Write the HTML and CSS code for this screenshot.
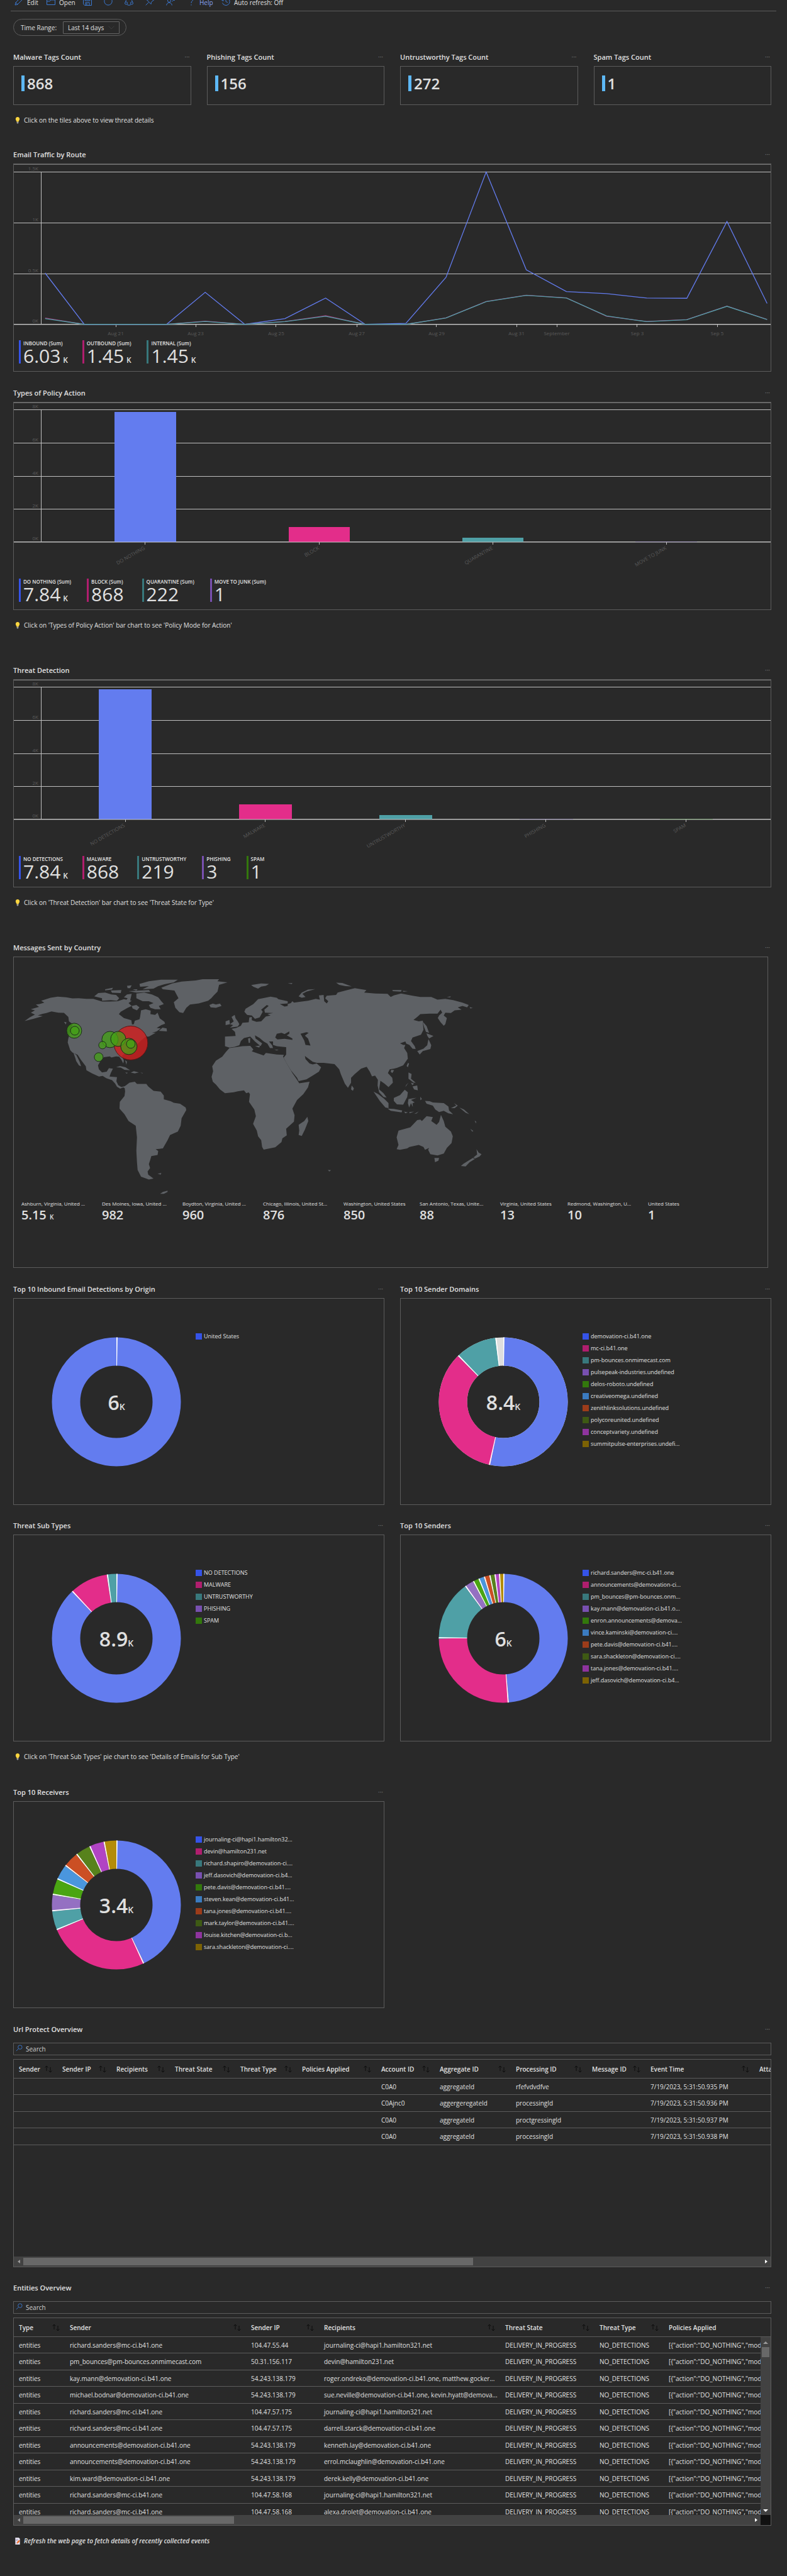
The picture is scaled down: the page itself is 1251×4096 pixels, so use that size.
FILE: index.html
```html
<!DOCTYPE html>
<html lang="en">
<head>
<meta charset="utf-8">
<meta name="viewport" content="width=device-width, initial-scale=1">
<title>Email Security Workbook</title>
<link rel="stylesheet" href="styles.css">
</head>
<body>
<svg class="defs" width="0" height="0" aria-hidden="true">
  <symbol id="bulb" viewBox="0 0 8 12"><path d="M4 0C1.800 0 0.500 1.600 0.500 3.500C0.500 5.500 2.200 6.300 2.400 8.500H5.600C5.800 6.300 7.500 5.500 7.500 3.500C7.500 1.600 6.200 0 4 0Z" fill="#fcd53f"/><path d="M2.500 8.500H5.500V10.500L4.800 11.500H3.200L2.500 10.500Z" fill="#9b9b9b"/></symbol>
  <symbol id="sort" viewBox="0 0 14 12"><path d="M4 9V1M1.500 3.500L4 1L6.500 3.500M10 3V11M7.500 8.500L10 11L12.500 8.500" fill="none" stroke="#0c0c0c"/></symbol>
  <symbol id="loupe" viewBox="0 0 12 12"><circle cx="7.500" cy="4.500" r="3.500" fill="none" stroke="#3b78d0"/><path d="M5 7L1 11" stroke="#3b78d0"/></symbol>
</svg>

<header class="toolbar">
  <button class="tool tool-edit"><svg class="icon" viewBox="0 0 14 14"><path d="M1 13L2 9L10.500 .7L13.300 3.500L5 12ZM2 9L5 12"/></svg>Edit</button>
  <button class="tool tool-open"><svg class="icon" viewBox="0 0 14 14"><path d="M.5 12.500V2.500H5L6.500 4H13.500V12.500ZM.5 7H5L7 5H13.500"/></svg>Open</button>
  <button class="tool" aria-label="Save"><svg class="icon" viewBox="0 0 14 14"><path d="M.5 .5H13.500V13.500H2.500L.5 11.500ZM3 .5V6H11V.5M4 13.500V9H10V13.500M6 10V13"/></svg></button>
  <button class="tool" aria-label="Refresh"><svg class="icon" viewBox="0 0 14 14"><path d="M4 1.500A6.200 6.200 0 1 0 10 1.500M10 5V1.500H13"/></svg></button>
  <button class="tool" aria-label="Share"><svg class="icon" viewBox="0 0 14 14"><circle cx="7" cy="2.500" r="2"/><circle cx="2.500" cy="10" r="2"/><circle cx="11.500" cy="10" r="2"/><path d="M4.500 3.500A6 6 0 0 0 1.500 8M9.500 3.500A6 6 0 0 1 12.500 8M4 12.500A6 6 0 0 0 10 12.500"/></svg></button>
  <button class="tool" aria-label="Pin"><svg class="icon" viewBox="0 0 14 14"><path d="M8.500 .7L13.300 5.500L12 6L9.500 8.500L9 11.500L2.500 5L5.500 4.500L8 2ZM5.500 8.500L.7 13.300"/></svg></button>
  <button class="tool" aria-label="Feedback"><svg class="icon" viewBox="0 0 14 14"><circle cx="5" cy="6" r="2.500"/><path d="M.7 13.500A4.300 4.300 0 0 1 9.300 13.500M7 .7H13.500V5.500H11.500L9.500 7.500"/></svg></button>
  <button class="tool tool-help"><svg class="icon" viewBox="0 0 14 14"><path d="M4 4A3 3 0 1 1 8.500 6.500Q7 7.500 7 10M7 12V13.500"/></svg>Help</button>
  <button class="tool tool-auto"><svg class="icon" viewBox="0 0 14 14"><path d="M1 3V6H4M1.500 5.500A6 6 0 1 1 1.500 9.500M7 3.500V7.500L10 9"/></svg>Auto refresh: Off</button>
</header>

<main class="page">
  <div class="pill">
    <label for="range">Time Range:</label>
    <span class="picker">
      <select id="range"><option>Last 14 days</option></select>
      <svg viewBox="0 0 10 6"><path d="M.5 .5L5 5L9.500 .5" fill="none" stroke="#3c3c3c"/></svg>
    </span>
  </div>

  <div class="tiles">
    <section><div class="head"><h2>Malware Tags Count</h2><button class="more" aria-label="More">···</button></div><div class="box tile"><b>868</b></div></section>
    <section><div class="head"><h2>Phishing Tags Count</h2><button class="more" aria-label="More">···</button></div><div class="box tile"><b>156</b></div></section>
    <section><div class="head"><h2>Untrustworthy Tags Count</h2><button class="more" aria-label="More">···</button></div><div class="box tile"><b>272</b></div></section>
    <section><div class="head"><h2>Spam Tags Count</h2><button class="more" aria-label="More">···</button></div><div class="box tile"><b>1</b></div></section>
  </div>
  <p class="tip"><svg viewBox="0 0 8 12"><use href="#bulb"/></svg>Click on the tiles above to view threat details</p>

  <section class="traffic">
    <div class="head"><h2>Email Traffic by Route</h2><button class="more" aria-label="More">···</button></div>
    <div class="box chart">
      <svg class="plot" viewBox="0 0 1203 280">
        <path class="edge" d="M0 .5H1203M0 255.500H1203"/>
        <path class="grid" d="M0 12.500H1203M0 93.500H1203M0 174.500H1203M0 254.500H1203M43.500 12V255"/>
        <path class="grid" d="M162.500 255V259M289.500 255V259M416.500 255V259M545.500 255V259M671.500 255V259M799.500 255V259M863.500 255V259M990.500 255V259M1118.500 255V259"/>
        <g transform="matrix(.7975 0 0 .3052 -22 -41.3)" fill="none" stroke-width="1.300">
          <polyline vector-effect="non-scaling-stroke" stroke="#637cef" points="90,703 168,970 332,970 409,803 488,970 568,940 649,833 728,970 809,965 889,725 969,176 1049,686 1129,799 1209,810 1289,833 1369,834 1449,434 1529,861"/>
          <polyline vector-effect="non-scaling-stroke" stroke="#a8377a" points="90,937 168,970 332,970 409,953 488,970 568,955 649,925 728,970 809,970 889,936 969,851 1049,818 1129,832 1209,928 1289,955 1369,945 1449,875 1529,944"/>
          <polyline vector-effect="non-scaling-stroke" stroke="#4fa0a6" points="90,940 168,970 332,970 409,955 488,970 568,956 649,928 728,970 809,970 889,937 969,852 1049,819 1129,833 1209,926 1289,956 1369,946 1449,876 1529,945"/>
        </g>
        <g class="ylab"><text x="39" y="10">1.5K</text><text x="39" y="91">1K</text><text x="39" y="172">0.5K</text><text x="39" y="252">0K</text></g>
        <g class="xlab"><text x="162" y="272">Aug 21</text><text x="289" y="272">Aug 23</text><text x="417" y="272">Aug 25</text><text x="545" y="272">Aug 27</text><text x="672" y="272">Aug 29</text><text x="799" y="272">Aug 31</text><text x="863" y="272">September</text><text x="991" y="272">Sep 3</text><text x="1118" y="272">Sep 5</text></g>
      </svg>
      <ul class="sums">
        <li class="c1"><span>INBOUND (Sum)</span><b>6.03 <i>K</i></b></li>
        <li class="c2"><span>OUTBOUND (Sum)</span><b>1.45 <i>K</i></b></li>
        <li class="c3"><span>INTERNAL (Sum)</span><b>1.45 <i>K</i></b></li>
      </ul>
    </div>
  </section>

  <section class="follow">
    <div class="head"><h2>Types of Policy Action</h2><button class="more" aria-label="More">···</button></div>
    <div class="box chart">
      <svg class="plot" viewBox="0 0 1203 280">
        <path class="edge" d="M0 .5H1203M0 222.500H1203"/>
        <path class="grid" d="M0 11.500H1203M0 64.500H1203M0 117.500H1203M0 169.500H1203M43.500 11V221"/>
        <rect x="160" y="15" width="98" height="206" fill="#637cef"/><rect x="437" y="198" width="97" height="23" fill="#e32d8a"/><rect x="713" y="215" width="97" height="6" fill="#4fa0a6"/>
        <path class="grid" d="M0 221.500H1203M208.500 222V226M485.500 222V226M761.500 222V226M1037.500 222V226"/>
        <path d="M160 221.500H258" stroke="#9aa8e8"/><path d="M437 221.500H534" stroke="#d87cac"/><path d="M713 221.500H810" stroke="#8cb4b6"/><path d="M988 221.500H1086" stroke="#a79fc0"/>
        <g class="ylab"><text x="39" y="9">8K</text><text x="39" y="62">6K</text><text x="39" y="115">4K</text><text x="39" y="167">2K</text><text x="39" y="219">0K</text></g>
        <g class="slant"><text transform="translate(209 233) rotate(-30)">DO NOTHING</text><text transform="translate(486 233) rotate(-30)">BLOCK</text><text transform="translate(762 233) rotate(-30)">QUARANTINE</text><text transform="translate(1038 233) rotate(-30)">MOVE TO JUNK</text></g>
      </svg>
      <ul class="sums">
        <li class="c1"><span>DO NOTHING (Sum)</span><b>7.84 <i>K</i></b></li>
        <li class="c2"><span>BLOCK (Sum)</span><b>868</b></li>
        <li class="c3"><span>QUARANTINE (Sum)</span><b>222</b></li>
        <li class="c4"><span>MOVE TO JUNK (Sum)</span><b>1</b></li>
      </ul>
    </div>
  </section>
  <p class="tip"><svg viewBox="0 0 8 12"><use href="#bulb"/></svg>Click on 'Types of Policy Action' bar chart to see 'Policy Mode for Action'</p>

  <section class="after-tip">
    <div class="head"><h2>Threat Detection</h2><button class="more" aria-label="More">···</button></div>
    <div class="box chart">
      <svg class="plot" viewBox="0 0 1203 280">
        <path class="edge" d="M0 .5H1203M0 222.500H1203"/>
        <path class="grid" d="M0 11.500H1203M0 64.500H1203M0 117.500H1203M0 169.500H1203M43.500 11V221"/>
        <rect x="135" y="15" width="84" height="206" fill="#637cef"/><rect x="358" y="198" width="84" height="23" fill="#e32d8a"/><rect x="581" y="215" width="84" height="6" fill="#4fa0a6"/>
        <path class="grid" d="M0 221.500H1203M177.500 222V226M399.500 222V226M622.500 222V226M845.500 222V226M1068.500 222V226"/>
        <path d="M135 221.500H219" stroke="#9aa8e8"/><path d="M358 221.500H442" stroke="#d87cac"/><path d="M581 221.500H665" stroke="#8cb4b6"/><path d="M804 221.500H889" stroke="#a79fc0"/><path d="M1027 221.500H1111" stroke="#8fb58a"/>
        <g class="ylab"><text x="39" y="9">8K</text><text x="39" y="62">6K</text><text x="39" y="115">4K</text><text x="39" y="167">2K</text><text x="39" y="219">0K</text></g>
        <g class="slant"><text transform="translate(177 233) rotate(-30)">NO DETECTIONS</text><text transform="translate(400 233) rotate(-30)">MALWARE</text><text transform="translate(623 233) rotate(-30)">UNTRUSTWORTHY</text><text transform="translate(846 233) rotate(-30)">PHISHING</text><text transform="translate(1069 233) rotate(-30)">SPAM</text></g>
      </svg>
      <ul class="sums">
        <li class="c1"><span>NO DETECTIONS</span><b>7.84 <i>K</i></b></li>
        <li class="c2"><span>MALWARE</span><b>868</b></li>
        <li class="c3"><span>UNTRUSTWORTHY</span><b>219</b></li>
        <li class="c4"><span>PHISHING</span><b>3</b></li>
        <li class="c5"><span>SPAM</span><b>1</b></li>
      </ul>
    </div>
  </section>
  <p class="tip"><svg viewBox="0 0 8 12"><use href="#bulb"/></svg>Click on 'Threat Detection' bar chart to see 'Threat State for Type'</p>

  <section class="after-tip">
    <div class="head"><h2>Messages Sent by Country</h2><button class="more" aria-label="More">···</button></div>
    <div class="box map">
      <svg class="plot" viewBox="0 0 1199 380">
        <g transform="matrix(.4965 0 0 .3052 -3.7 15)">
          <g fill="#5e6165">
            <path d="M42,284L70,272 100,258 84,254 100,246 110,243 128,234 150,240 168,241 182,262 184,285 196,300 190,330 182,375 180,395 188,435 195,448 212,460 222,485 238,520 240,540 258,557 280,573 292,570 304,582 322,592 332,610 338,626 348,636 358,630 366,636 366,622 352,628 342,618 336,598 338,576 314,573 318,555 325,532 312,530 305,548 290,552 280,535 277,515 284,495 296,472 315,468 320,474 335,468 345,470 352,485 358,505 360,490 354,465 365,452 385,430 400,410 415,385 430,365 440,365 462,345 450,345 465,338 478,322 465,320 480,305 492,298 490,288 475,270 468,240 460,252 445,248 446,230 430,222 415,228 412,262 410,275 395,282 392,300 386,302 384,280 360,268 344,248 350,235 372,215 385,205 375,190 385,178 360,170 340,180 315,182 290,182 262,168 240,168 215,165 195,166 175,160 148,157 125,162 95,178 105,188 90,195 78,198 88,210 62,222 75,228 62,240 75,250 58,265Z"/>
            <path d="M198,448L208,462 218,495 223,520 216,515 207,492 205,480ZM265,155L278,138 300,135 320,145 335,148 345,165 338,178 318,175 290,178 290,165ZM400,140L425,135 450,145 470,160 480,180 488,195 472,205 478,222 460,222 445,215 440,200 455,190 440,180 420,180 400,165ZM300,118L325,110 322,120 300,124ZM318,125L352,122 350,138 322,136ZM370,100L385,98 380,112 372,112ZM388,118L404,118 400,125ZM375,128L440,122 445,132 400,135ZM385,142L380,178 365,180 372,165 360,160 370,145ZM410,90L440,76 480,68 533,68 520,82 490,92 470,102 455,115 420,118 440,102 412,105ZM385,205L400,200 410,212 402,228 388,218ZM168,288L176,290 174,302Z"/>
            <path d="M480,110L515,88 545,78 590,72 612,66 665,66 660,76 692,82 665,95 660,130 648,150 640,165 630,178 600,192 572,198 560,215 550,242 538,238 525,215 520,185 535,165 522,125 485,118ZM634,200L645,193 655,198 668,193 673,205 655,215 638,212ZM472,335L484,318 497,322 498,338 485,336ZM335,525L348,518 365,525 380,540 362,538 350,526ZM382,553L392,545 408,552 395,557ZM364,553L372,553 370,558ZM413,553L421,554 419,557ZM364,488L370,495 368,512Z"/>
            <path d="M362,625L378,605 395,600 402,612 432,612 438,625 455,648 478,652 488,672 488,692 510,702 520,710 540,715 558,735 560,748 545,790 542,830 533,860 508,878 500,905 485,948 462,952 470,962 468,982 448,988 444,1010 440,1030 444,1050 436,1068 438,1085 455,1105 440,1110 415,1095 404,1060 402,1020 400,960 402,890 398,830 375,805 362,770 346,740 347,705 362,675 364,650ZM468,1080L480,1076 478,1085ZM476,1185L485,1175 500,1168 500,1175 488,1185Z"/>
            <path d="M686,447L698,425 740,415 765,413 775,432 770,442 808,463 815,450 850,458 873,460 870,470 882,505 900,555 915,590 922,608 955,600 950,630 935,665 915,695 900,740 907,775 905,808 880,845 882,880 868,895 865,915 845,942 820,950 808,954 803,940 800,905 790,885 786,855 774,820 783,780 778,745 761,705 764,665 760,656 752,660 745,645 725,650 712,655 684,660 668,640 655,615 645,600 641,575 646,545 643,520 655,490 675,470ZM948,783L951,805 940,850 930,883 920,878 922,855 920,825 938,805Z"/>
            <path d="M684,365L718,362 716,340 705,325 720,320 735,308 740,293 760,290 762,265 770,262 770,280 785,288 800,285 815,260 830,255 820,248 838,242 812,240 810,225 824,205 818,200 800,225 805,235 795,265 780,272 770,255 755,252 746,235 750,220 775,195 790,170 830,157 850,162 855,170 885,180 885,192 860,195 875,208 885,205 885,195 895,190 900,180 905,188 930,182 950,178 975,168 988,172 985,150 1000,148 1002,180 1010,192 1015,180 1005,165 1010,152 1040,148 1045,135 1070,125 1100,112 1137,122 1130,135 1165,140 1205,142 1215,158 1225,150 1248,140 1285,152 1310,158 1345,158 1365,172 1390,168 1415,175 1445,188 1465,200 1460,212 1445,205 1430,212 1442,225 1420,228 1408,242 1390,240 1385,255 1395,268 1390,300 1385,308 1375,290 1366,268 1370,255 1380,240 1375,225 1365,245 1340,245 1310,248 1300,262 1288,278 1305,285 1318,282 1320,330 1312,355 1285,370 1280,388 1292,415 1295,430 1285,428 1275,408 1265,402 1262,390 1245,400 1255,408 1262,408 1258,425 1268,450 1270,480 1255,515 1235,528 1225,532 1212,535 1206,555 1220,580 1222,605 1208,628 1195,610 1182,595 1178,640 1192,660 1202,683 1192,680 1178,655 1173,620 1174,590 1165,568 1155,572 1148,548 1138,522 1120,532 1100,560 1088,580 1088,605 1078,632 1068,610 1055,560 1050,535 1035,508 1000,502 978,502 965,496 950,478 940,466 942,482 955,505 965,510 978,505 992,525 985,548 965,568 945,588 920,597 915,580 895,540 880,500 872,475 880,458 880,420 868,418 850,415 838,408 838,390 825,390 835,410 838,425 828,425 820,402 808,390 795,372 780,358 782,375 803,400 798,415 780,390 765,365 745,372 735,388 730,410 715,418 698,422 684,415Z"/>
            <path d="M758,375L765,372 764,398 760,398ZM780,415L796,412 794,422ZM842,432L856,434 850,437ZM705,262L715,252 718,270 725,285 730,300 725,312 700,318 710,305 700,300 712,285ZM686,285L698,278 700,300 686,305ZM920,155L930,135 950,120 973,117 945,130 932,142 942,158 930,162ZM768,96L800,88 825,90 815,100 800,104 790,115 775,105ZM885,87L900,85 898,91ZM1040,84L1060,85 1090,103 1070,102 1050,95ZM1220,122L1250,122 1248,130 1222,128ZM1253,126L1270,128 1256,131ZM1395,158L1408,155 1405,161ZM1468,211L1478,216 1470,218Z"/>
            <path d="M1318,288L1330,310 1338,345 1328,340 1322,315ZM1330,348L1352,362 1338,375 1332,360ZM1336,378L1345,410 1342,430 1318,440 1308,458 1300,440 1320,428 1332,410ZM1270,503L1274,505 1270,525 1266,518ZM1217,538L1226,540 1220,555 1215,548ZM1090,620L1097,635 1094,648 1088,640ZM1160,652L1175,665 1195,690 1208,712 1208,738 1198,735 1180,700ZM1205,740L1225,742 1252,750 1250,760 1215,752ZM1258,756L1270,760 1262,765ZM1275,758L1290,756 1275,765ZM1290,768L1305,755 1298,766ZM1225,685L1245,670 1260,642 1270,655 1268,680 1255,720 1235,718 1225,700ZM1272,690L1298,684 1280,695 1292,708 1285,712 1286,732 1280,712 1274,735 1270,712ZM1272,552L1282,560 1280,585 1295,605 1288,605 1272,585ZM1285,625L1300,620 1302,645 1290,640ZM1280,605L1290,610 1284,618ZM1272,605L1262,628 1264,618ZM1310,678L1315,690 1310,697ZM1325,700L1340,702 1350,708 1385,712 1400,730 1402,750 1415,770 1400,765 1385,752 1370,758 1358,745 1350,725 1330,715ZM1408,738L1425,725 1418,712 1430,725 1420,738ZM1435,735L1450,745 1467,770 1455,762ZM1484,803L1489,808 1488,818ZM1470,845L1480,858 1476,860Z"/>
            <path d="M1240,855L1278,838 1300,800 1310,798 1315,805 1330,780 1350,785 1345,805 1362,825 1370,810 1376,773 1385,805 1390,835 1408,860 1414,885 1410,920 1395,945 1385,975 1365,985 1342,978 1335,955 1338,945 1325,955 1320,940 1305,930 1275,940 1268,948 1245,955 1234,952 1240,930 1234,890ZM1355,998L1370,998 1368,1012 1357,1020ZM1490,952L1497,970 1506,978 1500,990 1486,1000 1480,995 1492,980ZM1478,998L1485,1003 1468,1020 1455,1042 1440,1040 1448,1028ZM1014,1060L1024,1062 1018,1068Z"/>
          </g>
          <path fill="#292929" d="M845,370L850,350 865,345 875,352 890,338 890,350 882,358 900,375 900,382 875,376 852,380ZM926,350L945,342 952,345 940,360 950,375 958,412 942,408 938,385Z"/>
        </g>
        <g stroke="#1c2a1a">
          <circle cx="186" cy="136.500" r="27" fill="#d02020" fill-opacity=".82" stroke="#5a1414"/>
          <g fill="#44a215" fill-opacity=".75"><circle cx="96" cy="117" r="12"/><circle cx="97" cy="117" r="7"/><circle cx="153" cy="131" r="13"/><circle cx="166" cy="130" r="12"/><circle cx="183" cy="142" r="13"/><circle cx="186" cy="138" r="7"/><circle cx="141" cy="140" r="6"/><circle cx="135" cy="159" r="7"/></g>
        </g>
      </svg>
      <ul class="places">
        <li><span>Ashburn, Virginia, United ...</span><b>5.15 <i>K</i></b></li>
        <li><span>Des Moines, Iowa, United ...</span><b>982</b></li>
        <li><span>Boydton, Virginia, United ...</span><b>960</b></li>
        <li><span>Chicago, Illinois, United St...</span><b>876</b></li>
        <li><span>Washington, United States</span><b>850</b></li>
        <li><span>San Antonio, Texas, Unite...</span><b>88</b></li>
        <li><span>Virginia, United States</span><b>13</b></li>
        <li><span>Redmond, Washington, U...</span><b>10</b></li>
        <li><span>United States</span><b>1</b></li>
      </ul>
    </div>
  </section>

  <div class="pair follow">
    <section>
      <div class="head"><h2>Top 10 Inbound Email Detections by Origin</h2><button class="more" aria-label="More">···</button></div>
      <div class="box pie">
        <svg class="donut" viewBox="0 0 206 206"><g transform="rotate(-90 103 103)"><circle class="d1" cx="103" cy="103" r="80" pathLength="100" stroke-dasharray="100 100"/><circle class="cut" cx="103" cy="103" r="80" pathLength="100" stroke-dasharray=".3 100"/></g><text x="103" y="116">6<tspan>K</tspan></text></svg>
        <ul class="key"><li class="k1">United States</li></ul>
      </div>
    </section>
    <section>
      <div class="head"><h2>Top 10 Sender Domains</h2><button class="more" aria-label="More">···</button></div>
      <div class="box pie">
        <svg class="donut" viewBox="0 0 206 206"><g transform="rotate(-90 103 103)"><circle cx="103" cy="103" r="80" stroke="#dedede"/><circle class="d1" cx="103" cy="103" r="80" pathLength="100" stroke-dasharray="53.3 100"/><circle class="d2" cx="103" cy="103" r="80" pathLength="100" stroke-dasharray="34.3 100" stroke-dashoffset="-53.3"/><circle class="d3" cx="103" cy="103" r="80" pathLength="100" stroke-dasharray="10.4 100" stroke-dashoffset="-87.6"/><circle class="cut" cx="103" cy="103" r="80" pathLength="100" stroke-dasharray=".3 53 .3 34 .3 10.1 .3 100"/></g><text x="103" y="116">8.4<tspan>K</tspan></text></svg>
        <ul class="key"><li class="k1">demovation-ci.b41.one</li><li class="k2">mc-ci.b41.one</li><li class="k3">pm-bounces.onmimecast.com</li><li class="k4">pulsepeak-industries.undefined</li><li class="k5">delos-roboto.undefined</li><li class="k6">creativeomega.undefined</li><li class="k7">zenithlinksolutions.undefined</li><li class="k8">polycoreunited.undefined</li><li class="k9">conceptvariety.undefined</li><li class="k10">summitpulse-enterprises.undefi...</li></ul>
      </div>
    </section>
  </div>

  <div class="pair next">
    <section>
      <div class="head"><h2>Threat Sub Types</h2><button class="more" aria-label="More">···</button></div>
      <div class="box pie">
        <svg class="donut" viewBox="0 0 206 206"><g transform="rotate(-90 103 103)"><circle class="d1" cx="103" cy="103" r="80" pathLength="100" stroke-dasharray="88 100"/><circle class="d2" cx="103" cy="103" r="80" pathLength="100" stroke-dasharray="9.7 100" stroke-dashoffset="-87.9"/><circle class="d3" cx="103" cy="103" r="80" pathLength="100" stroke-dasharray="2.4 100" stroke-dashoffset="-97.6"/><circle class="cut" cx="103" cy="103" r="80" pathLength="100" stroke-dasharray=".3 87.6 .3 9.4 .3 100"/></g><text x="103" y="116">8.9<tspan>K</tspan></text></svg>
        <ul class="key"><li class="k1">NO DETECTIONS</li><li class="k2">MALWARE</li><li class="k3">UNTRUSTWORTHY</li><li class="k4">PHISHING</li><li class="k5">SPAM</li></ul>
      </div>
    </section>
    <section>
      <div class="head"><h2>Top 10 Senders</h2><button class="more" aria-label="More">···</button></div>
      <div class="box pie">
        <svg class="donut" viewBox="0 0 206 206"><g transform="rotate(-90 103 103)"><circle class="d1" cx="103" cy="103" r="80" pathLength="100" stroke-dasharray="48.6 100"/><circle class="d2" cx="103" cy="103" r="80" pathLength="100" stroke-dasharray="26.4 100" stroke-dashoffset="-48.6"/><circle class="d3" cx="103" cy="103" r="80" pathLength="100" stroke-dasharray="14.9 100" stroke-dashoffset="-75"/><circle class="d4" cx="103" cy="103" r="80" pathLength="100" stroke-dasharray="2.3 100" stroke-dashoffset="-89.9"/><circle class="d5" cx="103" cy="103" r="80" pathLength="100" stroke-dasharray="1.5 100" stroke-dashoffset="-92.2"/><circle class="d6" cx="103" cy="103" r="80" pathLength="100" stroke-dasharray="1.4 100" stroke-dashoffset="-93.7"/><circle class="d7" cx="103" cy="103" r="80" pathLength="100" stroke-dasharray="1.4 100" stroke-dashoffset="-95.1"/><circle class="d8" cx="103" cy="103" r="80" pathLength="100" stroke-dasharray="1.3 100" stroke-dashoffset="-96.5"/><circle class="d9" cx="103" cy="103" r="80" pathLength="100" stroke-dasharray="1.1 100" stroke-dashoffset="-97.8"/><circle class="d10" cx="103" cy="103" r="80" pathLength="100" stroke-dasharray="1.1 100" stroke-dashoffset="-98.9"/><circle class="cut" cx="103" cy="103" r="80" pathLength="100" stroke-dasharray=".3 48.3 .3 26.1 .3 14.6 .3 2 .3 1.2 .3 1.1 .3 1.1 .3 1 .3 .8 .3 100"/></g><text x="103" y="116">6<tspan>K</tspan></text></svg>
        <ul class="key"><li class="k1">richard.sanders@mc-ci.b41.one</li><li class="k2">announcements@demovation-ci...</li><li class="k3">pm_bounces@pm-bounces.onm...</li><li class="k4">kay.mann@demovation-ci.b41.o...</li><li class="k5">enron.announcements@demova...</li><li class="k6">vince.kaminski@demovation-ci....</li><li class="k7">pete.davis@demovation-ci.b41....</li><li class="k8">sara.shackleton@demovation-ci....</li><li class="k9">tana.jones@demovation-ci.b41....</li><li class="k10">jeff.dasovich@demovation-ci.b4...</li></ul>
      </div>
    </section>
  </div>
  <p class="tip"><svg viewBox="0 0 8 12"><use href="#bulb"/></svg>Click on 'Threat Sub Types' pie chart to see 'Details of Emails for Sub Type'</p>

  <div class="pair receivers">
    <section>
      <div class="head"><h2>Top 10 Receivers</h2><button class="more" aria-label="More">···</button></div>
      <div class="box pie">
        <svg class="donut" viewBox="0 0 206 206"><g transform="rotate(-90 103 103)"><circle class="d1" cx="103" cy="103" r="80" pathLength="100" stroke-dasharray="42.9 100"/><circle class="d2" cx="103" cy="103" r="80" pathLength="100" stroke-dasharray="25.7 100" stroke-dashoffset="-42.9"/><circle class="d3" cx="103" cy="103" r="80" pathLength="100" stroke-dasharray="4.8 100" stroke-dashoffset="-68.6"/><circle class="d4" cx="103" cy="103" r="80" pathLength="100" stroke-dasharray="4.1 100" stroke-dashoffset="-73.4"/><circle class="d5" cx="103" cy="103" r="80" pathLength="100" stroke-dasharray="4 100" stroke-dashoffset="-77.5"/><circle class="d6" cx="103" cy="103" r="80" pathLength="100" stroke-dasharray="3.9 100" stroke-dashoffset="-81.5"/><circle class="d7" cx="103" cy="103" r="80" pathLength="100" stroke-dasharray="3.9 100" stroke-dashoffset="-85.4"/><circle class="d8" cx="103" cy="103" r="80" pathLength="100" stroke-dasharray="3.8 100" stroke-dashoffset="-89.3"/><circle class="d9" cx="103" cy="103" r="80" pathLength="100" stroke-dasharray="3.7 100" stroke-dashoffset="-93.1"/><circle class="d10" cx="103" cy="103" r="80" pathLength="100" stroke-dasharray="3.2 100" stroke-dashoffset="-96.8"/><circle class="cut" cx="103" cy="103" r="80" pathLength="100" stroke-dasharray=".3 42.6 .3 25.4 .3 4.5 .3 3.8 .3 3.7 .3 3.6 .3 3.6 .3 3.5 .3 3.4 .3 100"/></g><text x="103" y="116">3.4<tspan>K</tspan></text></svg>
        <ul class="key"><li class="k1">journaling-ci@hapi1.hamilton32...</li><li class="k2">devin@hamilton231.net</li><li class="k3">richard.shapiro@demovation-ci....</li><li class="k4">jeff.dasovich@demovation-ci.b4...</li><li class="k5">pete.davis@demovation-ci.b41....</li><li class="k6">steven.kean@demovation-ci.b41...</li><li class="k7">tana.jones@demovation-ci.b41....</li><li class="k8">mark.taylor@demovation-ci.b41....</li><li class="k9">louise.kitchen@demovation-ci.b...</li><li class="k10">sara.shackleton@demovation-ci....</li></ul>
      </div>
    </section>
  </div>

  <section class="follow">
    <div class="head"><h2>Url Protect Overview</h2><button class="more" aria-label="More">···</button></div>
    <label class="search"><svg viewBox="0 0 12 12"><use href="#loupe"/></svg><input type="text" placeholder="Search" aria-label="Search Url Protect"></label>
    <div class="box list">
      <div class="view">
        <table class="urls">
          <colgroup><col class="w69"><col class="w86"><col class="w93"><col class="w104"><col class="w98"><col class="w126"><col class="w93"><col class="w121"><col class="w121"><col class="w93"><col class="w173"><col></colgroup>
          <thead><tr>
            <th><div>Sender<svg viewBox="0 0 14 12"><use href="#sort"/></svg></div></th><th><div>Sender IP<svg viewBox="0 0 14 12"><use href="#sort"/></svg></div></th><th><div>Recipients<svg viewBox="0 0 14 12"><use href="#sort"/></svg></div></th><th><div>Threat State<svg viewBox="0 0 14 12"><use href="#sort"/></svg></div></th><th><div>Threat Type<svg viewBox="0 0 14 12"><use href="#sort"/></svg></div></th><th><div>Policies Applied<svg viewBox="0 0 14 12"><use href="#sort"/></svg></div></th><th><div>Account ID<svg viewBox="0 0 14 12"><use href="#sort"/></svg></div></th><th><div>Aggregate ID<svg viewBox="0 0 14 12"><use href="#sort"/></svg></div></th><th><div>Processing ID<svg viewBox="0 0 14 12"><use href="#sort"/></svg></div></th><th><div>Message ID<svg viewBox="0 0 14 12"><use href="#sort"/></svg></div></th><th><div>Event Time<svg viewBox="0 0 14 12"><use href="#sort"/></svg></div></th><th><div>Atta</div></th>
          </tr></thead>
          <tbody>
            <tr><td></td><td></td><td></td><td></td><td></td><td></td><td>C0A0</td><td>aggregateId</td><td>rfefvdvdfve</td><td></td><td>7/19/2023, 5:31:50.935 PM</td><td></td></tr>
            <tr><td></td><td></td><td></td><td></td><td></td><td></td><td>C0Ajnc0</td><td>aggergeregateId</td><td>processingId</td><td></td><td>7/19/2023, 5:31:50.936 PM</td><td></td></tr>
            <tr><td></td><td></td><td></td><td></td><td></td><td></td><td>C0A0</td><td>aggregateId</td><td>proctgressingId</td><td></td><td>7/19/2023, 5:31:50.937 PM</td><td></td></tr>
            <tr><td></td><td></td><td></td><td></td><td></td><td></td><td>C0A0</td><td>aggregateId</td><td>processingId</td><td></td><td>7/19/2023, 5:31:50.938 PM</td><td></td></tr>
          </tbody>
        </table>
      </div>
      <div class="hbar"><i class="left"></i><span class="rail"><span class="thumb" style="width:61%"></span></span><i class="right"></i></div>
    </div>
  </section>

  <section class="next">
    <div class="head"><h2>Entities Overview</h2><button class="more" aria-label="More">···</button></div>
    <label class="search"><svg viewBox="0 0 12 12"><use href="#loupe"/></svg><input type="text" placeholder="Search" aria-label="Search Entities"></label>
    <div class="box list">
      <div class="view">
        <table class="entities">
          <colgroup><col class="w81"><col class="w288"><col class="w116"><col class="w288"><col class="w150"><col class="w110"><col></colgroup>
          <thead><tr>
            <th><div>Type<svg viewBox="0 0 14 12"><use href="#sort"/></svg></div></th><th><div>Sender<svg viewBox="0 0 14 12"><use href="#sort"/></svg></div></th><th><div>Sender IP<svg viewBox="0 0 14 12"><use href="#sort"/></svg></div></th><th><div>Recipients<svg viewBox="0 0 14 12"><use href="#sort"/></svg></div></th><th><div>Threat State<svg viewBox="0 0 14 12"><use href="#sort"/></svg></div></th><th><div>Threat Type<svg viewBox="0 0 14 12"><use href="#sort"/></svg></div></th><th><div>Policies Applied</div></th>
          </tr></thead>
          <tbody>
            <tr><td>entities</td><td>richard.sanders@mc-ci.b41.one</td><td>104.47.55.44</td><td>journaling-ci@hapi1.hamilton321.net</td><td>DELIVERY_IN_PROGRESS</td><td>NO_DETECTIONS</td><td>[{"action":"DO_NOTHING","mode</td></tr>
            <tr><td>entities</td><td>pm_bounces@pm-bounces.onmimecast.com</td><td>50.31.156.117</td><td>devin@hamilton231.net</td><td>DELIVERY_IN_PROGRESS</td><td>NO_DETECTIONS</td><td>[{"action":"DO_NOTHING","mode</td></tr>
            <tr><td>entities</td><td>kay.mann@demovation-ci.b41.one</td><td>54.243.138.179</td><td>roger.ondreko@demovation-ci.b41.one, matthew.gocker...</td><td>DELIVERY_IN_PROGRESS</td><td>NO_DETECTIONS</td><td>[{"action":"DO_NOTHING","mode</td></tr>
            <tr><td>entities</td><td>michael.bodnar@demovation-ci.b41.one</td><td>54.243.138.179</td><td>sue.neville@demovation-ci.b41.one, kevin.hyatt@demova...</td><td>DELIVERY_IN_PROGRESS</td><td>NO_DETECTIONS</td><td>[{"action":"DO_NOTHING","mode</td></tr>
            <tr><td>entities</td><td>richard.sanders@mc-ci.b41.one</td><td>104.47.57.175</td><td>journaling-ci@hapi1.hamilton321.net</td><td>DELIVERY_IN_PROGRESS</td><td>NO_DETECTIONS</td><td>[{"action":"DO_NOTHING","mode</td></tr>
            <tr><td>entities</td><td>richard.sanders@mc-ci.b41.one</td><td>104.47.57.175</td><td>darrell.starck@demovation-ci.b41.one</td><td>DELIVERY_IN_PROGRESS</td><td>NO_DETECTIONS</td><td>[{"action":"DO_NOTHING","mode</td></tr>
            <tr><td>entities</td><td>announcements@demovation-ci.b41.one</td><td>54.243.138.179</td><td>kenneth.lay@demovation-ci.b41.one</td><td>DELIVERY_IN_PROGRESS</td><td>NO_DETECTIONS</td><td>[{"action":"DO_NOTHING","mode</td></tr>
            <tr><td>entities</td><td>announcements@demovation-ci.b41.one</td><td>54.243.138.179</td><td>errol.mclaughlin@demovation-ci.b41.one</td><td>DELIVERY_IN_PROGRESS</td><td>NO_DETECTIONS</td><td>[{"action":"DO_NOTHING","mode</td></tr>
            <tr><td>entities</td><td>kim.ward@demovation-ci.b41.one</td><td>54.243.138.179</td><td>derek.kelly@demovation-ci.b41.one</td><td>DELIVERY_IN_PROGRESS</td><td>NO_DETECTIONS</td><td>[{"action":"DO_NOTHING","mode</td></tr>
            <tr><td>entities</td><td>richard.sanders@mc-ci.b41.one</td><td>104.47.58.168</td><td>journaling-ci@hapi1.hamilton321.net</td><td>DELIVERY_IN_PROGRESS</td><td>NO_DETECTIONS</td><td>[{"action":"DO_NOTHING","mode</td></tr>
            <tr><td>entities</td><td>richard.sanders@mc-ci.b41.one</td><td>104.47.58.168</td><td>alexa.drolet@demovation-ci.b41.one</td><td>DELIVERY_IN_PROGRESS</td><td>NO_DETECTIONS</td><td>[{"action":"DO_NOTHING","mode</td></tr>
          </tbody>
        </table>
        <div class="vbar"><i class="up"></i><span class="thumb"></span><i class="down"></i></div>
      </div>
      <div class="hbar"><i class="left"></i><span class="rail"><span class="thumb" style="width:29%"></span></span><i class="right"></i><span class="corner"></span></div>
    </div>
  </section>

  <p class="tip note"><svg viewBox="0 0 8 12"><path d="M0 0H6L8 2V12H0Z" fill="#e8e4f2"/><path d="M1 3H5M1 5H4M1 9H4" stroke="#9a8fb8"/><path d="M2.500 10L4 6L7 4L8 6L4.500 10Z" fill="#f0702c"/></svg>Refresh the web page to fetch details of recently collected events</p>
</main>
</body>
</html>
```
FILE: styles.css
```css
* { box-sizing: border-box; }

body {
  margin: 0;
  background: #292929;
  color: #e0e0e0;
  font: 10px/20px "Open Sans", "Noto Sans", sans-serif;
}

button, input, select {
  border: 0;
  padding: 0;
  background: none;
  color: inherit;
  font: inherit;
}

h2, p, ul { margin: 0; padding: 0; list-style: none; }
.defs { display: block; height: 0; }

/* Toolbar, scrolled halfway out at the top */
.toolbar {
  display: flex;
  height: 18px;
  margin: 0 17px;
  padding: 0 6px;
  border-bottom: 1px solid #5c5c5c;
  overflow: hidden;
}
.tool {
  display: flex;
  flex: none;
  align-items: center;
  gap: 6px;
  height: 20px;
  margin: -6px 19px 0 0;
  line-height: 14px;
  white-space: nowrap;
}
.tool-edit { width: 32px; }
.tool-open { width: 39px; }
.tool-help { width: 36px; color: #84a0f0; }
.icon {
  flex: none;
  width: 14px;
  height: 14px;
  margin-bottom: 4px;
  fill: none;
  stroke: #3b78d0;
}

.page { padding: 12px 25px 46px 21px; }

.pill {
  display: flex;
  align-items: center;
  gap: 10px;
  width: 180px;
  height: 27px;
  padding: 0 10px 0 11px;
  border: 1px solid #5c5c5c;
  border-radius: 14px;
}
.pill label { flex: none; }
.picker {
  display: flex;
  flex: 1;
  align-items: center;
  justify-content: space-between;
  height: 20px;
  padding: 0 7px;
  border: 1px solid #666;
  border-radius: 1px;
}
.picker select { appearance: none; }
.picker svg { width: 10px; height: 6px; }

.head {
  display: flex;
  justify-content: space-between;
  height: 24px;
}
.head h2 { font-size: 11px; line-height: 20px; font-weight: 600; white-space: nowrap; }
.more { padding-right: 2px; height: 18px; color: #777; line-height: 18px; }
.box { border: 1px solid #5c5c5c; }

.tiles {
  display: grid;
  grid-template-columns: repeat(4, 1fr);
  gap: 25px;
  margin-top: 24px;
}
.tile { height: 62px; padding: 14px 12px; }
.tile b {
  display: block;
  padding-left: 4px;
  border-left: 5px solid #5db8f5;
  font-size: 24px;
  line-height: 25px;
  font-weight: 600;
}

.tip {
  display: flex;
  align-items: center;
  gap: 6px;
  height: 20px;
  margin-top: 14px;
  padding-left: 3px;
}
.tip svg { width: 8px; height: 11px; }
.note { font-weight: 600; font-style: italic; }

.traffic { margin-top: 35px; }
.follow { margin-top: 24px; }
.next { margin-top: 23px; }
.after-tip { margin-top: 52px; }
.receivers { margin-top: 37px; }

/* Charts */
.chart { padding-bottom: 12px; }
.plot { display: block; width: 100%; height: auto; overflow: hidden; }
.grid { stroke: #bfbfbf; fill: none; }
.edge { stroke: #747474; fill: none; }
.plot text { font-size: 8px; fill: #5a5a5a; }
.ylab, .slant { text-anchor: end; }
.xlab { text-anchor: middle; }

.sums {
  display: flex;
  gap: 25px;
  height: 37px;
  padding-left: 8px;
}
.sums li { padding-left: 4px; border-left: 3px solid; white-space: nowrap; }
.sums span {
  display: block;
  color: #e0e0e0;
  font-size: 8px;
  line-height: 9px;
  font-weight: 600;
}
.sums b { display: block; padding-right: 4px; color: #e0e0e0; font-size: 30px; line-height: 32px; font-weight: 400; }
i { font-style: normal; }
.sums i { margin: 0 -6px 0 -4px; font-size: 12px; font-weight: 600; }
.sums .c1 { border-color: #3553e8; }
.sums .c2 { border-color: #b01e6e; }
.sums .c3 { border-color: #38787c; }
.sums .c4 { border-color: #7850b0; }
.sums .c5 { border-color: #33780c; }

.map { margin-right: 5px; min-height: 495px; }
.places {
  display: grid;
  grid-template-columns: 128px 128px 128px 128px 121px 128px 107px 128px auto;
  padding: 6px 0 0 12px;
}
.places span { display: block; font-size: 8px; line-height: 12px; white-space: nowrap; }
.places b { display: block; font-size: 20px; line-height: 24px; font-weight: 600; }
.places i { font-size: 10px; }

/* Donuts */
.pair { display: grid; grid-template-columns: 1fr 1fr; gap: 25px; }
.pie { display: flex; height: 329px; padding: 50px 0 0 60px; }
.donut { flex: none; width: 206px; height: 206px; margin-top: 11px; }
.donut circle { fill: none; stroke-width: 45; }
.donut text { fill: #e0e0e0; font-size: 32px; font-weight: 600; text-anchor: middle; }
.donut tspan { font-size: 14px; }
.donut .cut { stroke: #fff; }
.d1 { stroke: #637cef; }
.d2 { stroke: #e32d8a; }
.d3 { stroke: #4fa0a6; }
.d4 { stroke: #9470c2; }
.d5 { stroke: #4aa512; }
.d6 { stroke: #4a96de; }
.d7 { stroke: #cb4f24; }
.d8 { stroke: #57821c; }
.d9 { stroke: #b144c4; }
.d10 { stroke: #b38c09; }

.key { margin-left: 23px; font-size: 9px; line-height: 19px; white-space: nowrap; }
.key li { display: flex; align-items: center; gap: 3px; }
.key li::before { content: ""; width: 10px; height: 10px; background: #3553e8; }
.key .k2::before { background: #b01e6e; }
.key .k3::before { background: #38787c; }
.key .k4::before { background: #7850b0; }
.key .k5::before { background: #33780c; }
.key .k6::before { background: #3b7bc0; }
.key .k7::before { background: #9c3c1a; }
.key .k8::before { background: #3e5a14; }
.key .k9::before { background: #8e349e; }
.key .k10::before { background: #7c6204; }

/* Search boxes and tables */
.search {
  display: flex;
  align-items: center;
  gap: 5px;
  height: 20px;
  margin: 7px 0 6px;
  padding: 0 3px;
  border: 1px solid #5c5c5c;
}
.search svg { width: 11px; height: 11px; margin-bottom: 4px; }
.search input { flex: 1; line-height: 18px; }
.search input::placeholder { color: #d0d0d0; opacity: 1; }

.list { display: flex; flex-direction: column; height: 331px; }
.view { position: relative; flex: 1; overflow: hidden; }
table { width: 100%; table-layout: fixed; border-collapse: separate; border-spacing: 0; }
th, td {
  padding: 0 0 0 8px;
  border-bottom: 1px solid #5c5c5c;
  text-align: left;
  white-space: nowrap;
  overflow: hidden;
}
th { height: 30px; font-weight: 600; }
th div { display: flex; align-items: center; justify-content: space-between; padding-right: 7px; }
th svg { flex: none; width: 14px; height: 12px; }
td { height: 26px; }
tr:nth-child(even) td { height: 27px; }
.w69 { width: 69px; } .w81 { width: 81px; } .w86 { width: 86px; } .w93 { width: 93px; }
.w98 { width: 98px; } .w104 { width: 104px; } .w110 { width: 110px; } .w116 { width: 116px; }
.w121 { width: 121px; } .w126 { width: 126px; } .w150 { width: 150px; } .w173 { width: 173px; }
.w288 { width: 288px; }

.hbar { display: flex; align-items: center; height: 16px; background: #424242; }
.rail { flex: 1; height: 12px; }
.hbar .thumb { display: block; height: 12px; background: #686868; }
.left, .right, .up, .down { flex: none; border: 4px solid transparent; }
.left { margin: 0 5px 0 2px; border-right-color: #999; }
.left, .right { border-top-width: 3px; border-bottom-width: 3px; }
.right { margin: 0 1px 0 7px; border-left-color: #fff; }
.corner { width: 16px; height: 16px; background: #111; }
.vbar {
  position: absolute;
  top: 30px;
  right: 0;
  bottom: 0;
  display: flex;
  flex-direction: column;
  align-items: center;
  width: 16px;
  padding: 3px 0 1px;
  background: #424242;
}
.up { margin-bottom: 5px; border-bottom-color: #999; }
.down { margin-top: auto; border-top-color: #fff; }
.vbar .thumb { width: 12px; height: 16px; background: #686868; }
```
